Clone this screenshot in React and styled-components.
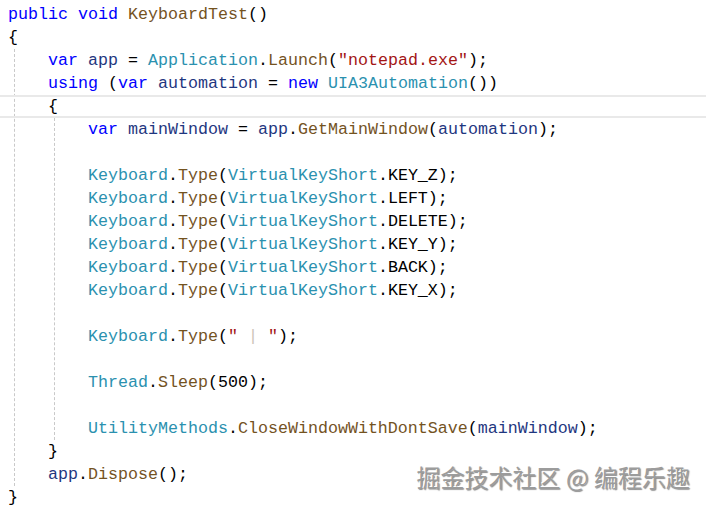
import React from 'react';
import styled, { createGlobalStyle } from 'styled-components';

const GlobalStyle = createGlobalStyle`
    html, body {
        margin: 0;
        padding: 0;
        background: #ffffff;
    }
`;

const colors = {
    kw: '#0000ff',
    method: '#74531f',
    type: '#2b91af',
    local: '#1f377f',
    str: '#a31515',
    faint: '#cdc5b8',
    plain: '#000000',
};

const Page = styled.div`
    position: relative;
    width: 706px;
    height: 507px;
    overflow: hidden;
    background: #ffffff;
`;

const Editor = styled.div`
    position: relative;
    padding: 3px 0 0 8px;
    font-family: "Liberation Mono", "DejaVu Sans Mono", monospace;
    font-size: 16.667px;
    color: #000;
`;

const Line = styled.div`
    height: 23px;
    line-height: 23px;
    white-space: pre;

    ${(p) => p.$current && `
        &::before {
            content: '';
            display: block;
            position: absolute;
            left: 0;
            right: 0;
            height: 23px;
            box-sizing: border-box;
            border-top: 2px solid #e9e9e9;
            border-bottom: 2px solid #e9e9e9;
            pointer-events: none;
        }
    `}
`;

// a { ... } body: the dashed indent guide sits under the brace
const Block = styled.div`
    margin-left: 6px;
    padding-left: 33px;
    border-left: 1px dashed #c9c9c9;
`;

const Tok = styled.span`
    color: ${(p) => colors[p.$k] || colors.plain};
`;

const Watermark = styled.div`
    position: absolute;
    right: 16px;
    bottom: 17px;
    font-family: "Noto Sans CJK SC", "Noto Sans", sans-serif;
    font-size: 24px;
    line-height: 26px;
    white-space: pre;
    color: #9c9c9c;
    text-shadow: -1px -1px 0 #ffffff, 1px 1px 1px rgba(0, 0, 0, 0.45);
`;

const Code = ({ tokens }) => (
    <Line>
        {tokens.map((t, i) =>
            typeof t === 'string' ? (
                <Tok key={i}>{t}</Tok>
            ) : (
                <Tok key={i} $k={t[0]}>{t[1]}</Tok>
            )
        )}
    </Line>
);

const keys = ['KEY_Z', 'LEFT', 'DELETE', 'KEY_Y', 'BACK', 'KEY_X'];

function App() {
    return (
        <Page>
            <GlobalStyle />
            <Editor>
                <Code tokens={[['kw', 'public'], ' ', ['kw', 'void'], ' ', ['method', 'KeyboardTest'], '()']} />
                <Line>{'{'}</Line>
                <Block>
                    <Code tokens={[['kw', 'var'], ' ', ['local', 'app'], ' = ', ['type', 'Application'], '.', ['method', 'Launch'], '(', ['str', '"notepad.exe"'], ');']} />
                    <Code tokens={[['kw', 'using'], ' (', ['kw', 'var'], ' ', ['local', 'automation'], ' = ', ['kw', 'new'], ' ', ['type', 'UIA3Automation'], '())']} />
                    <Line $current>{'{'}</Line>
                    <Block>
                        <Code tokens={[['kw', 'var'], ' ', ['local', 'mainWindow'], ' = ', ['local', 'app'], '.', ['method', 'GetMainWindow'], '(', ['local', 'automation'], ');']} />
                        <Line />
                        {keys.map((k) => (
                            <Code key={k} tokens={[['type', 'Keyboard'], '.', ['method', 'Type'], '(', ['type', 'VirtualKeyShort'], '.' + k + ');']} />
                        ))}
                        <Line />
                        <Code tokens={[['type', 'Keyboard'], '.', ['method', 'Type'], '(', ['str', '" '], ['faint', '|'], ['str', ' "'], ');']} />
                        <Line />
                        <Code tokens={[['type', 'Thread'], '.', ['method', 'Sleep'], '(500);']} />
                        <Line />
                        <Code tokens={[['type', 'UtilityMethods'], '.', ['method', 'CloseWindowWithDontSave'], '(', ['local', 'mainWindow'], ');']} />
                    </Block>
                    <Line>{'}'}</Line>
                    <Code tokens={[['local', 'app'], '.', ['method', 'Dispose'], '();']} />
                </Block>
                <Line>{'}'}</Line>
            </Editor>
            <Watermark>掘金技术社区 @ 编程乐趣</Watermark>
        </Page>
    );
}

export default App;
